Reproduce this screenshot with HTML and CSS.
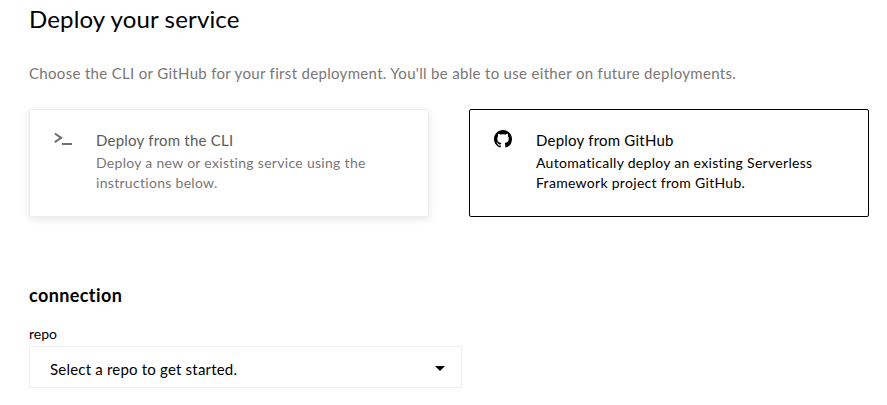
FILE: index.html
```html
<!DOCTYPE html>
<html lang="en">
<head>
<meta charset="utf-8">
<title>Deploy your service</title>
<link rel="stylesheet" href="styles.css">
</head>
<body>
<main class="page">
  <h1 class="title">Deploy your service</h1>
  <p class="lead">Choose the CLI or GitHub for your first deployment. You'll be able to use either on future deployments.</p>
  <div class="cards">
    <section class="card card-idle">
      <div class="icon-box"><svg width="20" height="17" viewBox="0 0 20 17" aria-hidden="true"><path d="M.8 3.5l6.4 4.3-6.4 4.3" fill="none" stroke="#6f6f6f" stroke-width="2"/><rect x="8" y="13" width="10" height="2" fill="#6f6f6f"/></svg></div>
      <div class="card-text">
        <h2 class="card-title">Deploy from the CLI</h2>
        <p class="card-desc">Deploy a new or existing service using the instructions below.</p>
      </div>
    </section>
    <section class="card card-active">
      <div class="icon-box"><svg width="18" height="18" viewBox="0 0 16 16" aria-hidden="true"><path fill="#000" fill-rule="evenodd" d="M8 0C3.58 0 0 3.58 0 8c0 3.54 2.29 6.53 5.47 7.59.4.07.55-.17.55-.38 0-.19-.01-.82-.01-1.49-2.01.37-2.53-.49-2.69-.94-.09-.23-.48-.94-.82-1.13-.28-.15-.68-.52-.01-.53.63-.01 1.08.58 1.23.82.72 1.21 1.87.87 2.33.66.07-.52.28-.87.51-1.07-1.78-.2-3.64-.89-3.64-3.95 0-.87.31-1.59.82-2.15-.08-.2-.36-1.02.08-2.12 0 0 .67-.21 2.2.82.64-.18 1.32-.27 2-.27s1.36.09 2 .27c1.53-1.04 2.2-.82 2.2-.82.44 1.1.16 1.92.08 2.12.51.56.82 1.27.82 2.15 0 3.07-1.87 3.75-3.65 3.95.29.25.54.73.54 1.48 0 1.07-.01 1.93-.01 2.2 0 .21.15.46.55.38A8.01 8.01 0 0 0 16 8c0-4.42-3.58-8-8-8z"/></svg></div>
      <div class="card-text">
        <h2 class="card-title">Deploy from GitHub</h2>
        <p class="card-desc">Automatically deploy an existing Serverless Framework project from GitHub.</p>
      </div>
    </section>
  </div>
  <h2 class="section-title">connection</h2>
  <div class="field-label">repo</div>
  <div class="select">
    <span class="select-text">Select a repo to get started.</span>
    <span class="caret"></span>
  </div>
</main>
</body>
</html>
```

FILE: styles.css
```css
* { box-sizing: border-box; }
html, body { margin: 0; padding: 0; background: #fff; }
body { font-family: "Lato", "Liberation Sans", sans-serif; color: #000; overflow: hidden; }
.page { padding: 3px 0 0 29px; }
.title { margin: 0; font-size: 24px; font-weight: 400; line-height: 32px; letter-spacing: .15px; }
.lead { margin: 28px 0 0; font-size: 15px; line-height: 20px; letter-spacing: .32px; color: #7a7676; }
.cards { display: flex; gap: 40px; margin-top: 26px; }
.card { display: flex; width: 400px; height: 108px; padding: 20px 24px; border-radius: 2px; }
.card-idle { border: 1px solid #eee; box-shadow: 0 2px 8px rgba(0,0,0,.1); }
.card-active { border: 1px solid #000; }
.icon-box { flex: none; width: 42px; }
.card-text { min-width: 0; }
.card-title { margin: 0; font-size: 15px; font-weight: 400; line-height: 20px; letter-spacing: .22px; color: #5b5b5b; }
.card-desc { margin: 3px 0 0; font-size: 14px; line-height: 20px; letter-spacing: .3px; color: #7a7676; }
.card-active .card-title, .card-active .card-desc { color: #000; }
.section-title { margin: 66px 0 0; font-size: 18px; font-weight: 700; line-height: 24px; letter-spacing: .4px; }
.field-label { margin-top: 18px; font-size: 14px; line-height: 18px; }
.select { display: flex; justify-content: space-between; align-items: center; width: 433px; height: 42px; margin-top: 3px; padding: 0 16px 0 20px; border: 1px solid #eee; font-size: 15px; letter-spacing: .2px; }
.select-text { margin-top: 3px; }
.caret { width: 0; height: 0; border-left: 5px solid transparent; border-right: 5px solid transparent; border-top: 5px solid #000; margin-top: 3px; }
```
